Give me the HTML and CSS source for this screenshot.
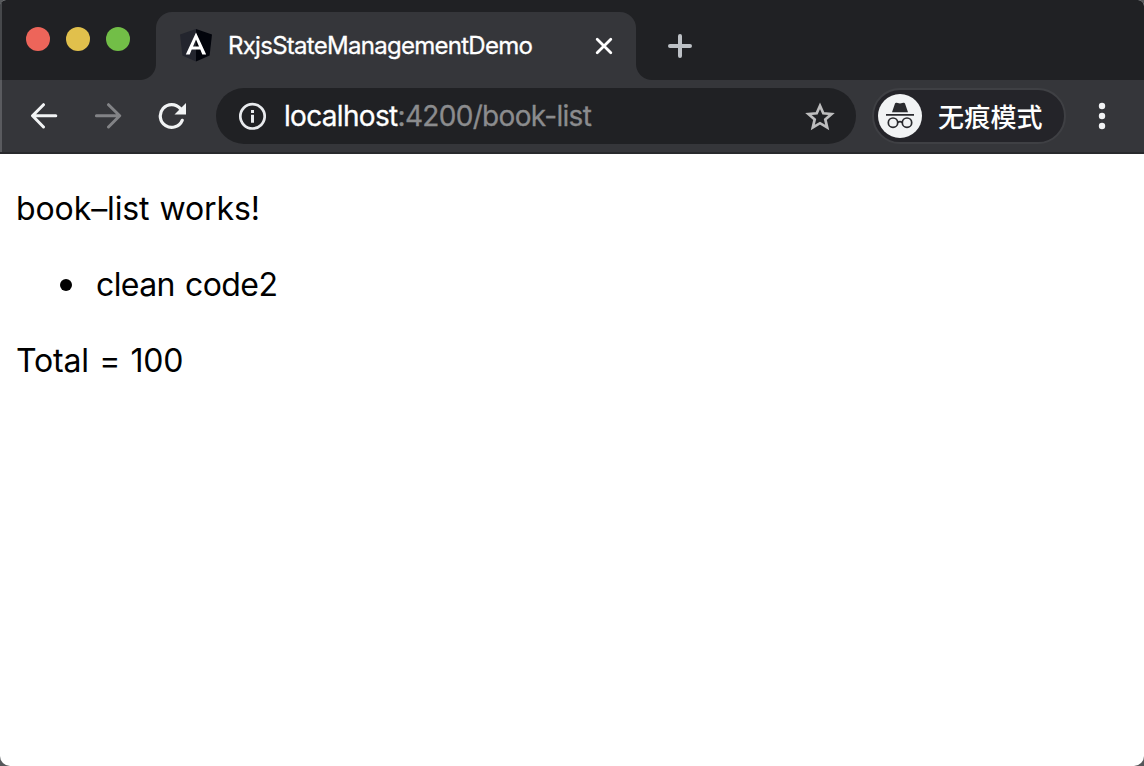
FILE: index.html
```html
<!DOCTYPE html>
<html lang="zh-CN">
<head>
<meta charset="utf-8">
<title>RxjsStateManagementDemo</title>
<link rel="stylesheet" href="styles.css">
</head>
<body>
<div class="window">
  <header class="tab-strip">
    <div class="lights">
      <span class="light close"></span>
      <span class="light minimize"></span>
      <span class="light maximize"></span>
    </div>
    <div class="tab">
      <svg class="favicon" width="32" height="33" viewBox="0 0 32 33">
        <path fill="#23252e" d="M16 0 0 5.5l2.4 21L16 32.5z"/>
        <path fill="#02040b" d="M16 0l16 5.5-2.4 21L16 32.5z"/>
        <path fill="#fff" fill-rule="evenodd" d="M16 3.5 5.8 25.5h3.9l2-5h8.6l2 5h3.9zM16 10.5l3 6.9h-6z"/>
      </svg>
      <span class="tab-title">RxjsStateManagementDemo</span>
      <svg class="tab-close" width="18" height="18" viewBox="0 0 18 18"><path fill="none" stroke="#fff" stroke-width="2.8" stroke-linecap="round" d="M2.2 2.2l13.6 13.6M15.8 2.2 2.2 15.8"/></svg>
    </div>
    <svg class="new-tab" width="24" height="24" viewBox="0 0 24 24"><path fill="none" stroke="#bdc1c6" stroke-width="4" stroke-linecap="round" d="M12 2v20M2 12h20"/></svg>
  </header>
  <nav class="toolbar">
    <svg class="back" width="28" height="26" viewBox="0 0 28 26"><path fill="none" stroke="#f1f3f4" stroke-width="3" stroke-linecap="round" stroke-linejoin="round" d="M13.5 1.7 2.5 12.8l11 11.2M3 12.8h22.8"/></svg>
    <svg class="forward" width="28" height="26" viewBox="0 0 28 26"><path fill="none" stroke="#828386" stroke-width="3" stroke-linecap="round" stroke-linejoin="round" d="M14.5 1.7 25.7 12.8 14.5 24M25.2 12.8H2.4"/></svg>
    <svg class="reload" width="28" height="28" viewBox="0 0 28 28">
      <path fill="none" stroke="#f1f3f4" stroke-width="3.2" stroke-linecap="round" d="M24.2 18.3A11.4 11.4 0 1 1 22.4 6.6"/>
      <path fill="#f1f3f4" d="M28 1v11.5H16.5z"/>
    </svg>
    <div class="address">
      <svg width="28" height="28" viewBox="0 0 28 28"><circle cx="14.5" cy="14.3" r="12.2" fill="none" stroke="#e8eaed" stroke-width="2.7"/><path fill="#e8eaed" d="M13 8h3v3h-3zM13 12.8h3v8h-3z"/></svg>
      <span class="url"><span class="host">localhost</span>:4200/book-list</span>
      <svg class="star" width="30" height="29" viewBox="0 0 30 29"><path fill="none" stroke="#bdbdbe" stroke-width="2.7" d="M15 3.8l3.3 7.5 8.2.7-6.2 5.4 1.9 8L15 21.2l-7.2 4.2 1.9-8L3.5 12l8.2-.7z"/></svg>
    </div>
    <div class="incognito">
      <svg width="44" height="44" viewBox="0 0 44 44">
        <circle cx="22" cy="22" r="22" fill="#f1f3f4"/>
        <path fill="#292a2e" d="M14 18.2l3-8.6q.4-1.2 1.7-.9l3.3.8 3.3-.8q1.3-.3 1.7.9l3 8.6zM8 20h28v1.8H8z"/>
        <g fill="none" stroke="#292a2e" stroke-width="1.7"><circle cx="15" cy="28.7" r="4.7"/><circle cx="29" cy="28.7" r="4.7"/><path d="M19.7 28.5q2.3-1.6 4.6 0"/></g>
      </svg>
      <span class="mode">无痕模式</span>
    </div>
    <svg class="menu" width="8" height="28" viewBox="0 0 8 28" fill="#f1f3f4"><circle cx="4" cy="4" r="3.2"/><circle cx="4" cy="14" r="3.2"/><circle cx="4" cy="24" r="3.2"/></svg>
  </nav>
  <main class="page">
    <p class="works">book–list works!</p>
    <ul class="books"><li>clean code2</li></ul>
    <p class="total">Total = 100</p>
  </main>
</div>
</body>
</html>
```
FILE: styles.css
```css
* { box-sizing: border-box; }
body { margin: 0; background: #55575a; font-family: Inter, "Noto Sans CJK SC", sans-serif; }
svg { display: block; flex: none; }
.window { height: 766px; overflow: hidden; background: #fff; border-radius: 6px 6px 10px 10px; display: flex; flex-direction: column; }
.tab-strip { height: 80px; background: #202124; display: flex; flex: none; box-shadow: inset 2px 0 #46484b; }
.lights { width: 156px; padding: 27px 0 0 26px; display: flex; gap: 16px; }
.light { width: 24px; height: 24px; border-radius: 50%; }
.close { background: #ed655a; }
.minimize { background: #e1c04c; }
.maximize { background: #72be47; }
.tab { position: relative; width: 480px; height: 68px; margin-top: 12px; padding: 0 23px 1px 24px; background: #35363a; border-radius: 16px 16px 0 0; display: flex; align-items: center; }
.tab::before, .tab::after { content: ""; position: absolute; bottom: 0; width: 16px; height: 16px; }
.tab::before { left: -16px; background: radial-gradient(circle at 0 0, transparent 15.5px, #35363a 16.5px); }
.tab::after { right: -16px; background: radial-gradient(circle at 100% 0, transparent 15.5px, #35363a 16.5px); }
.tab-title { margin-left: 16px; flex: 1; color: #fff; font-size: 24px; -webkit-text-stroke: 0.3px; letter-spacing: -0.72px; white-space: nowrap; }
.new-tab { margin: 34px 0 0 32px; }
.toolbar { height: 74px; padding: 0 38px 0 30px; background: #35363a; border-bottom: 2px solid #28292c; box-shadow: inset 2px 0 #5a5b5f; display: flex; flex: none; align-items: center; }
.forward { margin-left: 36px; }
.reload { margin-left: 36px; }
.address { width: 640px; height: 56px; margin-left: 30px; padding: 0 21px 0 22px; border-radius: 28px; background: #202124; display: flex; align-items: center; }
.url { flex: 1; margin-left: 18px; color: #8b8c8e; font-size: 28px; -webkit-text-stroke: 0.3px; letter-spacing: -0.68px; white-space: nowrap; }
.host { color: #fff; }
.incognito { width: 194px; height: 56px; margin-left: 16px; padding-left: 4px; border: 2px solid #3f4044; border-radius: 28px; background: #242429; display: flex; align-items: center; }
.mode { margin-left: 16px; padding-bottom: 2px; color: #fff; font: 500 26px "Noto Sans CJK SC", sans-serif; letter-spacing: 0.2px; white-space: nowrap; }
.menu { margin-left: 32px; }
.page { padding: 36px 16px; color: #000; font-size: 32px; line-height: 38px; display: flex; flex-direction: column; gap: 38px; }
.page p, .books { margin: 0; }
.works { letter-spacing: -0.1px; word-spacing: 1px; }
.books { padding-left: 44px; list-style: none; letter-spacing: -0.6px; word-spacing: 1.8px; }
.books li { display: flex; align-items: center; gap: 24px; }
.books li::before { content: ""; width: 12px; height: 12px; border-radius: 50%; background: #000; }
.total { letter-spacing: -0.15px; word-spacing: 1.4px; }
```
